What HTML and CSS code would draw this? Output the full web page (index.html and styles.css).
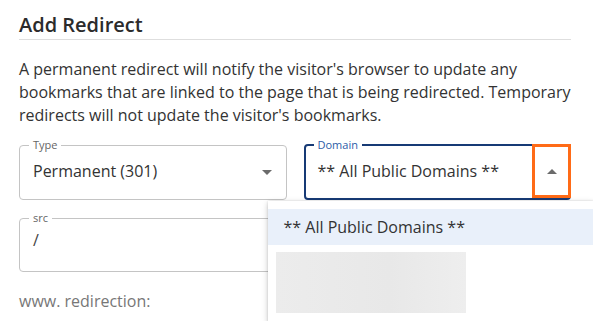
FILE: index.html
```html
<!DOCTYPE html>
<html lang="en">
<head>
  <meta charset="UTF-8">
  <meta name="viewport" content="width=device-width, initial-scale=1">
  <title>Add Redirect</title>
  <link rel="stylesheet" href="styles.css">
</head>
<body>
  <div class="panel">
    <h2 class="panel-title">Add Redirect</h2>
    <p class="intro">A permanent redirect will notify the visitor's browser to update any bookmarks that are linked to the page that is being redirected. Temporary redirects will not update the visitor's bookmarks.</p>

    <div class="row">
      <div class="field-wrap">
        <fieldset class="field">
          <legend>Type</legend>
          <div class="select-value">
            <span>Permanent (301)</span>
            <span class="caret down"></span>
          </div>
        </fieldset>
      </div>

      <div class="field-wrap">
        <fieldset class="field focused">
          <legend>Domain</legend>
          <div class="select-value">
            <span>** All Public Domains **</span>
          </div>
        </fieldset>
        <div class="toggle-highlight">
          <span class="caret up"></span>
        </div>

        <!-- open menu -->
        <div class="menu">
          <div class="menu-item active">** All Public Domains **</div>
          <div class="menu-blur"></div>
        </div>
      </div>
    </div>

    <fieldset class="field text-field">
      <legend>src</legend>
      <div class="input-value">/</div>
    </fieldset>

    <div class="sub-label">www. redirection:</div>
  </div>
</body>
</html>
```

FILE: styles.css
```css
* {
  box-sizing: border-box;
}

body {
  margin: 0;
  background-color: #fff;
  font-family: "Open Sans", Arial, sans-serif;
  color: #333;
  overflow: hidden;
  height: 321px;
}

.panel {
  padding: 12px 22px 0 19px;
}

.panel-title {
  margin: 0;
  font-size: 20px;
  font-weight: 600;
  line-height: 26px;
  color: #2b2b2b;
  padding-bottom: 1px;
  border-bottom: 1px solid #dedede;
}

.intro {
  margin: 18px 0 0;
  font-size: 16px;
  line-height: 23px;
  color: #333;
}

.row {
  display: flex;
  gap: 17px;
  margin-top: 11px;
}

.field-wrap {
  flex: 1;
  position: relative;
}

.field {
  margin: 0;
  padding: 0 14px 16px 13px;
  border: 1px solid #c4c4c4;
  border-radius: 4px;
  min-width: 0;
}

.field legend {
  font-size: 11px;
  line-height: 14px;
  color: #666;
  padding: 0 4px;
  margin-left: -4px;
}

.field.focused {
  border: 2px solid #173a75;
  padding: 0 13px 15px 12px;
}

.field.focused legend {
  color: #2c5ca8;
}

.select-value {
  display: flex;
  align-items: center;
  justify-content: space-between;
  padding-top: 7px;
  font-size: 16px;
  line-height: 24px;
  color: #333;
}

.caret {
  width: 0;
  height: 0;
  border-left: 5px solid transparent;
  border-right: 5px solid transparent;
}

.caret.down {
  border-top: 5px solid #6b6b6b;
  margin-top: 2px;
}

.caret.up {
  border-bottom: 5px solid #6b6b6b;
}

.toggle-highlight {
  position: absolute;
  top: 6px;
  right: 0;
  width: 39px;
  height: 54px;
  border: 3px solid #ff6b17;
  display: flex;
  align-items: center;
  justify-content: center;
}

.menu {
  position: absolute;
  top: 63px;
  left: -36px;
  width: 326px;
  height: 121px;
  padding-top: 8px;
  background-color: #fff;
  box-shadow: 0 2px 6px rgba(0, 0, 0, 0.22), 0 0 2px rgba(0, 0, 0, 0.12);
  z-index: 5;
}

.menu-item {
  height: 36px;
  padding-left: 16px;
  font-size: 16px;
  line-height: 36px;
  color: #333;
}

.menu-item.active {
  background-color: #e9f0fa;
}

.menu-blur {
  width: 190px;
  height: 61px;
  margin: 7px 0 0 8px;
  background: linear-gradient(90deg, #ececec, #e8e8e8 60%, #eeeeee);
}

.text-field {
  margin-top: 11px;
  padding-bottom: 19px;
}

.input-value {
  padding-top: 3px;
  font-size: 16px;
  line-height: 24px;
  color: #444;
}

.sub-label {
  margin-top: 17px;
  font-size: 16px;
  line-height: 24px;
  color: #777;
}
```
